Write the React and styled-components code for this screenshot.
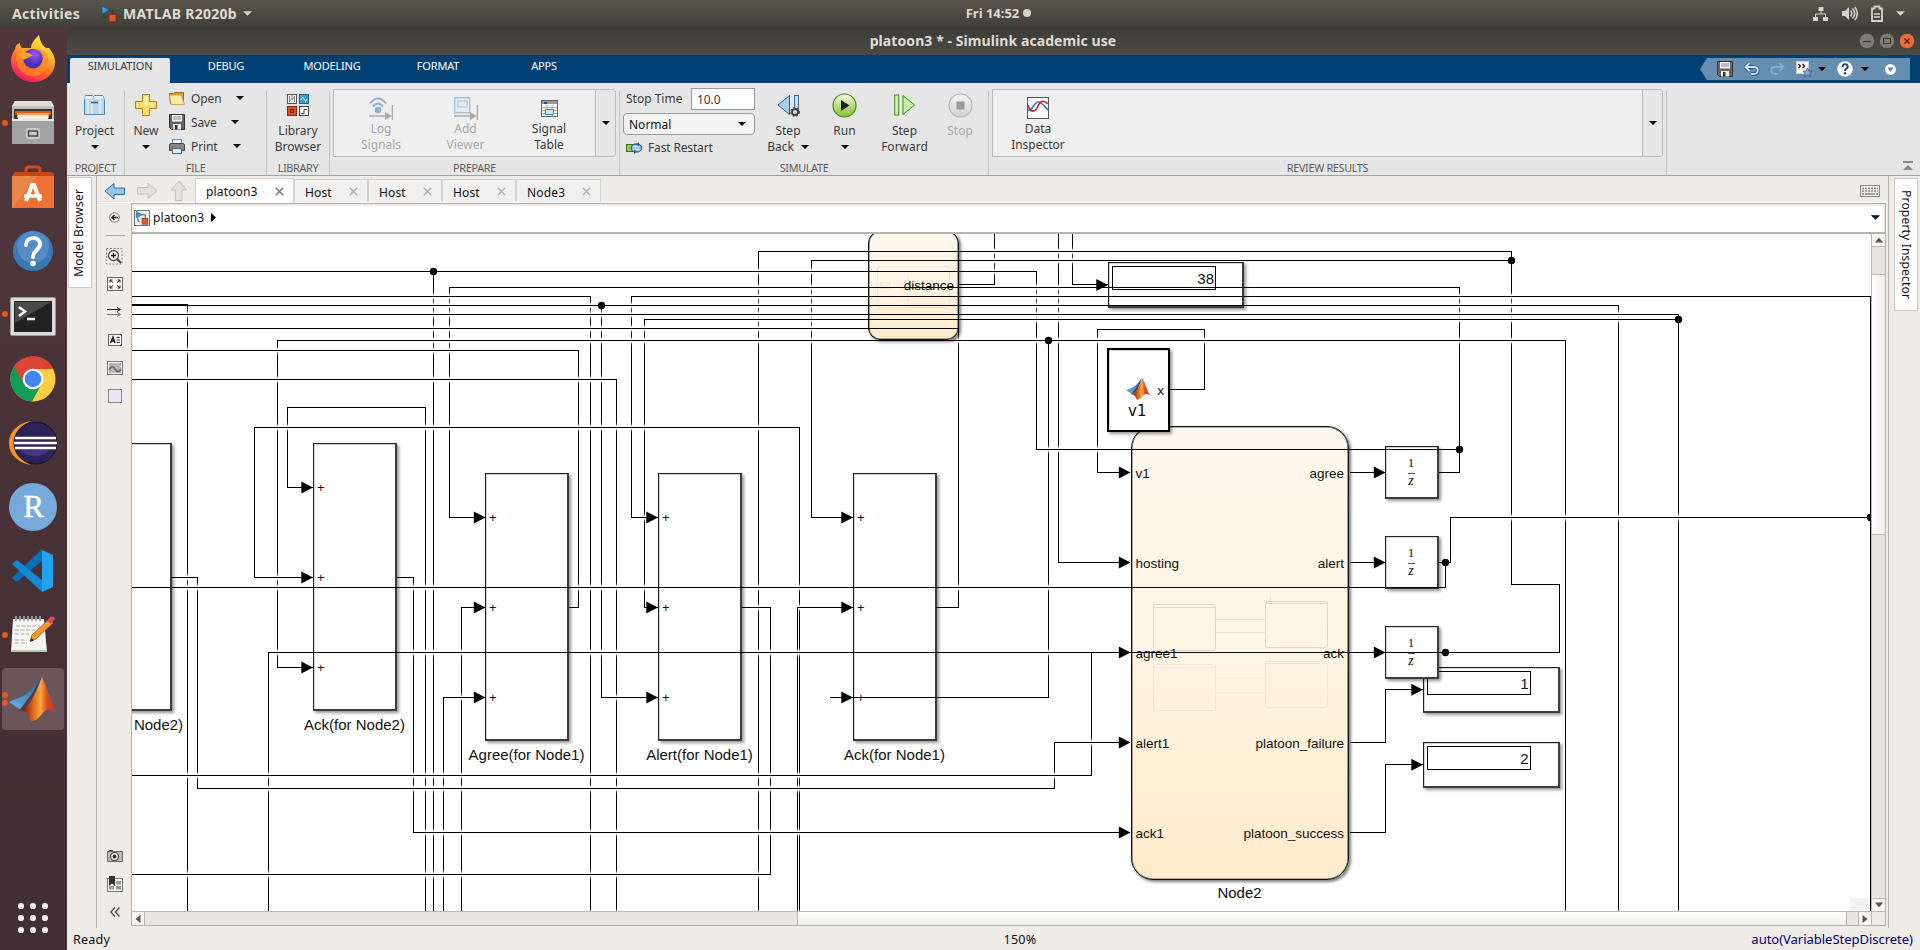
import React from "react";
import styled, { createGlobalStyle, css } from "styled-components";

const UI = `"Noto Sans", "Open Sans", sans-serif`;

const Global = createGlobalStyle`
  * { box-sizing: border-box; }
  body { margin: 0; overflow: hidden; background: #efebe7; font-family: ${UI}; color: #1a1a1a; }
  svg { display: block; flex: none; }
`;

/* ---------- shell ---------- */
const Screen = styled.div`
  width: 1920px; height: 950px; display: flex; flex-direction: column; overflow: hidden;
`;
const TopBar = styled.header`
  height: 27px; flex: none; display: grid; grid-template-columns: 1fr auto 1fr; align-items: center;
  background: linear-gradient(#5a564d, #403f39); color: #dfdbd2; font-size: 14px; line-height: 26px; font-weight: 700;
  padding: 0 15px 0 12px; white-space: nowrap;
`;
const TopGroup = styled.div`
  display: flex; align-items: center; gap: ${p => p.$gap || 0}px; justify-content: ${p => p.$end ? "flex-end" : "flex-start"};
`;
const Clock = styled(TopGroup)`font-size: 13px; position: relative; left: 40px; padding-bottom: 1px;`;
const TopText = styled.span`letter-spacing: ${p => p.$ls || 0}px; margin: 0 ${p => p.$mr || 0}px 0 ${p => p.$ml || 0}px;`;
const Body = styled.div`flex: 1; display: flex; min-height: 0;`;
const Dock = styled.nav`
  width: 67px; flex: none; display: flex; flex-direction: column;
  background: linear-gradient(#50363b, #483237 50%, #402f35);
`;
const DockItem = styled.div`
  height: 64px; flex: none; display: flex; align-items: center; justify-content: center; position: relative;
  padding: ${p => p.$down || 0}px 1px ${p => p.$up || 0}px 0;
  ${p => p.$active && css`
    &::before { content: ""; position: absolute; left: 2px; top: 1px; width: 62px; height: 62px; border-radius: 4px; background: #69555a; }
  `}
  svg { position: relative; }
`;
const Pip = styled.i`
  position: absolute; left: 2px; top: ${p => p.$y}px; width: 6px; height: 6px; border-radius: 50%; background: #e95420; z-index: 1;
`;
const DockFoot = styled(DockItem)`margin-top: auto; height: 64px;`;
const Window = styled.main`flex: 1; display: flex; flex-direction: column; min-width: 0;`;
const TitleBar = styled.div`
  height: 28px; flex: none; display: grid; grid-template-columns: 1fr auto 1fr; align-items: center; color: #dfdbd2;
  background: linear-gradient(#3c3b37, #4b4a44); font-size: 14px; line-height: 26px; font-weight: 700; padding: 0 5px 0 0;
`;
const WinButtons = styled.div`display: flex; gap: 4px; justify-content: flex-end;`;
const WinTitle = styled.span`margin-left: 4px; letter-spacing: .08px; padding-bottom: 1px;`;

/* ---------- ribbon ---------- */
const TabStrip = styled.div`
  height: 28px; flex: none; background: #004073; display: flex; align-items: flex-start; padding: 3px 10px 0 3px;
`;
const RibbonTab = styled.div`
  width: ${p => p.$active ? 100 : 106}px; margin-right: ${p => p.$active ? 3 : 0}px; height: 25px; border-radius: 2px 2px 0 0;
  background: ${p => p.$active ? "#e6e6e6" : "transparent"}; color: ${p => p.$active ? "#3b3b3b" : "#fff"};
  font-size: 11px; line-height: 16px; text-align: center; letter-spacing: ${p => p.$ls}px;
`;
const Quick = styled.div`
  margin-left: auto; width: 210px; height: 22px; background: #688eaf; display: flex; align-items: center; padding-left: 17px;
  clip-path: polygon(0 50%, 7px 0, 100% 0, 100% 100%, 7px 100%);
`;
const Gap = styled.i`flex: none; width: ${p => p.$w}px;`;
const Ribbon = styled.div`
  height: 93px; flex: none; background: #e6e6e6; border-bottom: 1px solid #a0a0a0; display: flex;
`;
const Section = styled.section`
  width: ${p => p.$w}px; flex: none; position: relative; display: flex; flex-direction: column;
  &::after { content: ""; position: absolute; right: 0; top: 8px; bottom: 0; width: 1px; background: #c4c4c4; }
`;
const SectionBody = styled.div`height: 77px; display: flex; align-items: flex-start; padding-left: ${p => p.$pl || 0}px;`;
const Caption = styled.div`
  height: 15px; line-height: 15px; font-size: 10.8px; color: #5b5b5b; text-align: center; letter-spacing: ${p => p.$ls ?? -0.3}px; white-space: nowrap;
  padding-right: 1px;
`;
const BigButton = styled.div`
  width: ${p => p.$w}px; flex: none; padding-top: ${p => p.$top ?? 10}px; display: flex; flex-direction: column; align-items: center;
  font-size: 12px; line-height: 16px; color: ${p => p.$off ? "#a9a9a9" : "#3b3b3b"}; text-align: center; white-space: nowrap;
`;
const IconBox = styled.div`height: 24px; display: flex; align-items: center; margin-bottom: ${p => p.$mb ?? 6}px;`;
const Line = styled.div`height: 16px; display: flex; align-items: center; gap: 7px;`;
const FileList = styled.div`padding: 3px 0 0 2px; display: flex; flex-direction: column;`;
const FileRow = styled.div`height: 24px; display: flex; align-items: center; gap: 6px; font-size: 12px; color: #3b3b3b;`;
const RowLabel = styled.span`width: ${p => p.$w}px; white-space: nowrap; letter-spacing: -.1px;`;
const Gallery = styled.div`
  margin-top: 6px; width: ${p => p.$w}px; height: 68px; border: 1px solid #bcbcbc; border-radius: 0 3px 3px 0; background: #efefef; display: flex;
`;
const GalleryDrop = styled.div`
  margin-left: auto; width: 20px; border-left: 1px solid #bcbcbc; background: #e6e6e6; display: flex; align-items: center; justify-content: center;
  border-radius: 0 3px 3px 0;
`;
const SimForm = styled.div`width: 135px; padding-top: 5px; display: flex; flex-direction: column; gap: 3px;`;
const SimRow = styled.div`
  height: 22px; display: flex; align-items: center; justify-content: space-between; padding: 0 3px; font-size: 12px; color: #3b3b3b; white-space: nowrap;
`;
const RaisedLabel = styled.span`padding-bottom: 2px;`;
const Input = styled.div`
  width: 64px; height: 22px; background: #fff; border: 1px solid #999; padding-left: 5px; line-height: 22px; font-size: 12px; letter-spacing: -.1px;
`;
const Select = styled.div`
  width: 132px; height: 22px; background: #f4f4f4; border: 1px solid #999; border-radius: 4px; display: flex; align-items: center;
  justify-content: space-between; padding: 0 8px 0 5px; font-size: 12px; color: #111;
`;
const FastRestart = styled(SimRow)`justify-content: flex-start; gap: 5px; height: 19px; letter-spacing: -.15px;`;
const RibbonRest = styled.div`flex: 1; display: flex; align-items: flex-end; justify-content: flex-end; padding: 0 7px 4px 0;`;

/* ---------- workspace ---------- */
const Workspace = styled.div`flex: 1; display: flex; min-height: 0; background: #efebe7;`;
const LeftRail = styled.aside`width: 30px; flex: none; border-right: 1px solid #b5b3b0; padding: 1px 0 0 1px;`;
const RightRail = styled.aside`width: 32px; flex: none; border-left: 1px solid #b5b3b0; padding: 2px 0 0 5px;`;
const SideTab = styled.div`
  width: 24px; height: ${p => p.$h}px; background: #fff; border: 1px solid #c8c8c8; writing-mode: vertical-rl; font-size: 12px; line-height: ${p => p.$flip ? 20 : 22}px;
  text-align: center; transform: ${p => p.$flip ? "rotate(180deg)" : "none"}; letter-spacing: ${p => p.$ls}px; color: #111;
`;
const Center = styled.div`flex: 1; display: flex; flex-direction: column; min-width: 0;`;
const DocBar = styled.div`
  height: 27px; flex: none; display: flex; align-items: flex-end; padding: 0 8px 0 7px; border-bottom: 1px solid #fff;
`;
const NavIcons = styled.div`width: 91px; height: 25px; display: flex; align-items: center; gap: 10px;`;
const DocTab = styled.div`
  width: ${p => p.$w}px; height: ${p => p.$active ? 25 : 23}px; margin-bottom: ${p => p.$active ? -1 : 0}px; padding: 0 9px 0 10px;
  background: ${p => p.$active ? "#fff" : "#f0f0f0"}; border: 1px solid #d2d2d2; border-bottom: 0;
  display: flex; align-items: center; justify-content: space-between; font-size: 12px; color: #111; letter-spacing: .15px;
`;
const TabLabel = styled.span`padding-top: ${p => p.$active ? 1 : 3}px;`;
const Keyboard = styled.div`margin-left: auto; height: 22px; display: flex; align-items: center; padding-bottom: 1px;`;
const EditorRow = styled.div`flex: 1; display: flex; min-height: 0;`;
const Palette = styled.div`
  width: 34px; flex: none; display: flex; flex-direction: column; align-items: center; padding: 9px 0 2px;
`;
const PaletteIcon = styled.div`height: 28px; display: flex; align-items: center; justify-content: center; padding-left: 1px;`;
const PaletteRule = styled.i`width: 19px; height: 1px; background: #a8a8a8; margin: 12px 0 6px 2px;`;
const Spring = styled.i`flex: 1;`;
const Editor = styled.div`width: 1755px; display: flex; flex-direction: column; border: 1px solid #b5b3b0; border-top-color: #b0aeaa; height: 723px;`;
const PathBar = styled.div`
  height: 30px; flex: none; border: 2px solid #efebe7; background: #fff; display: flex; align-items: center; gap: 3px; padding: 0 3px 3px 0;
  font-size: 12px; color: #111; letter-spacing: .1px;
`;
const PathDrop = styled.div`margin-left: auto;`;
const CanvasRow = styled.div`display: grid; grid-template-columns: 1739px 14px; grid-template-rows: 677px 14px; border-top: 2px solid #b5b3b0; margin-top: -2px;`;
const Canvas = styled.div`position: relative; overflow: hidden; background: #fff;`;
const VScroll = styled.div`display: flex; flex-direction: column; background: #e7e4e1; border-left: 1px solid #bcb9b5;`;
const HScroll = styled.div`display: flex; background: #e7e4e1; border-top: 1px solid #bcb9b5;`;
const ScrollBtn = styled.div`
  width: 13px; height: 13px; flex: none; background: #f6f5f3; display: flex; align-items: center; justify-content: center;
  border: 0 solid #bcb9b5; border-width: ${p => p.$b};
`;
const Trough = styled.i`flex: ${p => p.$s ? `0 0 ${p.$s}px` : 1};`;
const VThumb = styled.i`height: 261px; border: solid #bcb9b5; border-width: 1px 0; background: linear-gradient(90deg, #fff, #f0eeeb);`;
const HThumb = styled.i`width: 1050px; border: solid #bcb9b5; border-width: 0 1px; background: linear-gradient(#fff, #f0eeeb);`;
const Corner = styled.i`background: #efebe7; border: solid #bcb9b5; border-width: 1px 0 0 1px;`;
const StatusBar = styled.footer`
  height: 22px; flex: none; background: #efebe7; display: grid; grid-template-columns: 1fr auto 1fr; align-items: center; padding: 0 7px 0 6px;
  font-size: 12.6px; color: #111; letter-spacing: .2px;
`;
const Zoom = styled.span`position: relative; left: 27px; letter-spacing: .2px;`;
const Solver = styled.span`text-align: right; color: #00007c; font-size: 13px; letter-spacing: -.02px;`;

/* ---------- diagram ---------- */
const OX = 132, OY = 234;
const place = css`position: absolute; left: ${p => p.$x - OX}px; top: ${p => p.$y - OY}px; width: ${p => p.$w}px; height: ${p => p.$h}px;`;
const Block = styled.div`
  ${place} background: #fff; border: solid #2c2c2c; border-width: ${p => p.$bw ? `${p.$bw}px` : "1px 2px 2px 1px"};
  border-color: ${p => p.$bw ? "#000" : "#222 #3c3c3c #3c3c3c #222"};
  box-shadow: inset .5px .5px 0 rgba(0,0,0,.35), 2px 2px 3px rgba(0,0,0,.42);
  font-family: "Liberation Sans", Arial, sans-serif; color: #111;
`;
const Chart = styled(Block)`
  border-radius: ${p => p.$r}px; border: 1px solid #111; background: linear-gradient(#fff8ee, #fff5e3 50%, #feebcb);
  box-shadow: inset 0 0 0 .6px rgba(0,0,0,.6), 2px 2px 3px rgba(0,0,0,.5);
`;
const BlockName = styled.div`
  position: absolute; left: ${p => p.$cx - OX - (p.$w || 160) / 2}px; top: ${p => p.$y - OY}px; width: ${p => p.$w || 160}px; text-align: center;
  font: 15px/18px "Liberation Sans", Arial, sans-serif; color: #111;
`;
const Port = styled.div`
  position: absolute; top: ${p => p.$y}px; ${p => p.$side || "left"}: ${p => p.$plus ? 3 : 4}px; font-size: ${p => p.$plus ? 13 : 13.5}px; line-height: 16px; white-space: nowrap;
`;
const Readout = styled.div`
  margin: 3px 0 0 3px; width: ${p => p.$w}px; height: 24px; border: 1px solid #000; text-align: right; padding-right: 1px; font-size: 15px; line-height: 23px;
`;
const Fraction = styled.div`
  height: 100%; display: flex; flex-direction: column; align-items: center; justify-content: center; font: 13px/15px "Liberation Serif", serif; padding: 0 1px 1px 0;
  i { width: 7px; height: 1px; background: #555; margin: 3px 0 0; }
`;
const ZVar = styled.em`font-size: 14px; line-height: 14px;`;
const FnName = styled.div`position: absolute; left: 19px; top: 52px; font: 15px/18px "DejaVu Sans", sans-serif;`;
const FnLogo = styled.div`position: absolute; left: 17px; top: 27px;`;
const Wires = styled.svg`position: absolute; left: 0; top: 0;`;
const Ghost = styled.svg`position: absolute; left: ${p => p.$x}px; top: ${p => p.$y}px;`;
const Grip = styled.i`position: absolute; right: 3px; bottom: 1px; width: 18px; height: 12px; background: #f2f2f2;`;

const B = 911;
const wires = [
  [[132,271.5],[1036.5,271.5],[1036.5,449.5],[1459.5,449.5]],
  [[433.5,271.5],[433.5,B]],
  [[132,296.5],[590.5,296.5],[590.5,B]],
  [[132,304.5],[187.5,304.5],[187.5,B]],
  [[132,305.5],[1618.5,305.5],[1618.5,B]],
  [[601.5,305.5],[601.5,697.5],[658,697.5]],
  [[132,314.5],[1678.5,314.5],[1678.5,B]],
  [[1678.5,319.5],[644.5,319.5],[644.5,607.5],[658,607.5]],
  [[132,328.5],[958.5,328.5],[958.5,607.5],[936,607.5]],
  [[313,667.5],[277.5,667.5],[277.5,340.5],[1565.5,340.5],[1565.5,B]],
  [[1048.5,340.5],[1048.5,697.5],[830,697.5]],
  [[132,350.5],[578.5,350.5],[578.5,607.5],[569,607.5]],
  [[132,379.5],[616.5,379.5],[616.5,B]],
  [[313,487.5],[287.5,487.5],[287.5,407.5],[425.5,407.5],[425.5,B]],
  [[313,577.5],[254.5,577.5],[254.5,427.5],[799.5,427.5],[799.5,B]],
  [[486,517.5],[449.5,517.5],[449.5,287.5],[1459.5,287.5],[1459.5,472.5],[1439,472.5]],
  [[758.5,B],[758.5,251.5],[1511.5,251.5],[1511.5,584.5],[1559.5,584.5],[1559.5,652.5],[268.5,652.5],[268.5,B]],
  [[1511.5,260.5],[811.5,260.5],[811.5,517.5],[853,517.5]],
  [[658,517.5],[631.5,517.5],[631.5,296.5],[1870.5,296.5],[1870.5,B]],
  [[1870.5,517.5],[1450.5,517.5],[1450.5,562.5],[1439,562.5]],
  [[1445.5,562.5],[1445.5,587.5],[132,587.5]],
  [[171,577.5],[197.5,577.5],[197.5,788.5],[1054.5,788.5],[1054.5,742.5],[1130,742.5]],
  [[397,577.5],[413.5,577.5],[413.5,832.5],[1130,832.5]],
  [[132,775.5],[1091.5,775.5],[1091.5,652.5]],
  [[132,874.5],[770.5,874.5],[770.5,607.5],[742,607.5]],
  [[486,607.5],[461.5,607.5],[461.5,B]],
  [[486,697.5],[443.5,697.5],[443.5,B]],
  [[853,607.5],[797.5,607.5],[797.5,B]],
  [[959,284.5],[994.5,284.5],[994.5,234]],
  [[1058.5,234],[1058.5,562.5],[1130,562.5]],
  [[1072.5,234],[1072.5,284.5],[1108,284.5]],
  [[1170,389.5],[1204.5,389.5],[1204.5,329.5],[1097.5,329.5],[1097.5,472.5],[1130,472.5]],
  [[1350,472.5],[1386,472.5]],
  [[1350,562.5],[1386,562.5]],
  [[1350,742.5],[1385.5,742.5],[1385.5,689.5],[1423,689.5]],
  [[1350,832.5],[1385.5,832.5],[1385.5,764.5],[1423,764.5]],
];
const arrows = [
  [313,487.5],[313,577.5],[313,667.5],[485.5,517.5],[485.5,607.5],[485.5,697.5],[658,517.5],[658,607.5],[658,697.5],
  [853,517.5],[853,607.5],[853,697.5],[1130.5,472.5],[1130.5,562.5],[1130.5,652.5],[1130.5,742.5],[1130.5,832.5],
  [1385.5,472.5],[1385.5,562.5],[1385.5,652.5],[1423,689.8],[1423,764.8],[1108,284.9],
];
const dots = [[433.5,271.5],[601.5,305.5],[1048.5,340.5],[1511.5,260.5],[1678.5,319.5],[1459.5,449.5],[1445.5,562.5],[1445.5,652.5],[1870.5,517.5]];

const segs = wires.flatMap(w => w.slice(1).map((b, i) => [w[i], b]));
const hor = segs.filter(([a, b]) => a[1] === b[1]).map(([a, b]) => ({ y: a[1], x1: Math.min(a[0], b[0]), x2: Math.max(a[0], b[0]) }));
const ver = segs.filter(([a, b]) => a[0] === b[0]).map(([a, b]) => ({ x: a[0], y1: Math.min(a[1], b[1]), y2: Math.max(a[1], b[1]) }));
const belowView = { y: 913.5, x1: 585, x2: 1700 };
const fades = ver.flatMap(v => [...hor, belowView]
  .filter(h => h.x1 < v.x - 1 && h.x2 > v.x + 1 && h.y > v.y1 + 1 && (h.y < v.y2 - 1 || h === belowView && v.y2 === B))
  .map(h => [v.x, h.y - 6]));

const Diagram = () => (
  <Wires width="1739" height="677" viewBox="132 234 1739 677">
    <defs>
      <linearGradient id="hop" x1="0" y1="0" x2="0" y2="1">
        <stop offset="0" stopColor="#fff" stopOpacity="0" /><stop offset=".22" stopColor="#fff" stopOpacity=".22" /><stop offset=".42" stopColor="#fff" />
        <stop offset=".58" stopColor="#fff" /><stop offset=".78" stopColor="#fff" stopOpacity=".22" /><stop offset="1" stopColor="#fff" stopOpacity="0" />
      </linearGradient>
    </defs>
    <g stroke="#000" shapeRendering="crispEdges">
      {ver.map((v, i) => <line key={i} x1={v.x} x2={v.x} y1={v.y1 - .5} y2={v.y2 + .5} />)}
    </g>
    {fades.map(([x, y], i) => <rect key={i} x={x - .5} y={y} width="1" height="12" fill="url(#hop)" />)}
    <g stroke="#000" shapeRendering="crispEdges">
      {hor.map((h, i) => <line key={i} x1={h.x1} x2={h.x2} y1={h.y} y2={h.y} />)}
    </g>
    {arrows.map(([x, y], i) => <path key={i} d={`M${x} ${y}l-11.7 -6v12z`} />)}
    {dots.map(([x, y], i) => <circle key={i} cx={x} cy={y} r="3.7" />)}
  </Wires>
);

const Sum = ({ x, y, name }) => (
  <>
    <Block $x={x} $y={y} $w={84} $h={268}>
      {[36, 126, 216].map(t => <Port key={t} $y={t} $plus>+</Port>)}
    </Block>
    <BlockName $cx={x + 41.5} $y={y + 273}>{name}</BlockName>
  </>
);
const Display = ({ x, y, w, rw, value }) => (
  <Block $x={x} $y={y} $w={w} $h={46}><Readout $w={rw}>{value}</Readout></Block>
);
const Delay = ({ y }) => (
  <Block $x={1385} $y={y} $w={54} $h={52.5}><Fraction>1<i /><ZVar>z</ZVar></Fraction></Block>
);

/* ---------- icons ---------- */
const Caret = ({ w = 8, h = 4, c = "#000" }) => <svg width={w} height={h} viewBox="0 0 8 4"><path d="M0 0h8L4 4z" fill={c} /></svg>;

const SimulinkMark = ({ s = 16, boxed }) => (
  <svg width={s} height={s} viewBox="0 0 16 16">
    {boxed && <rect x=".5" y=".5" width="15" height="15" fill="#eee" stroke="#777" />}
    <g transform={boxed ? "translate(1.5 1.5) scale(.82)" : ""}>
      <path d="M1 0v8l7-4z" fill="#3aa0dc" stroke="#125a94" strokeWidth=".7" />
      <path d="M8 4h4v5M5 12H3V8" fill="none" stroke="#333" /><rect x="8" y="8.500" width="7" height="7" fill="#e4572a" stroke="#8a2c0a" strokeWidth=".8" />
    </g>
  </svg>
);
const MatlabLogo = ({ w, h }) => (
  <svg width={w} height={h} viewBox="0 0 48 45">
    <defs>
      <linearGradient id="ml" x1="0" y1="0" x2="1" y2="0"><stop offset="0" stopColor="#7c1c14" /><stop offset=".35" stopColor="#e8741e" /><stop offset=".52" stopColor="#f7a93c" /><stop offset=".7" stopColor="#dc4a22" /><stop offset="1" stopColor="#c23322" /></linearGradient>
      <linearGradient id="mb" x1="0" y1="1" x2="1" y2="0"><stop offset="0" stopColor="#6ab8e8" /><stop offset="1" stopColor="#1c5c96" /></linearGradient>
    </defs>
    <path d="M0 25l14-6C20 16 26 8 32 0c-4 12-8 23-14 31-3 1-5-1-6 2z" fill="url(#mb)" />
    <path d="M33 0c5 10 9 26 15 36-5-4-9-5-13-1-4 4-8 10-13 9-2-4-5-10-8-10 9-8 14-21 19-34z" fill="url(#ml)" />
    <path d="M32 1c-5 11-8 24-18 33-2-1-3-1-5 1 8-11 16-19 23-34z" fill="#6b1712" opacity=".75" />
  </svg>
);
const Firefox = () => (
  <svg width="46" height="47" viewBox="0 0 46 47">
    <defs>
      <linearGradient id="ff" x1=".8" y1="0" x2=".3" y2="1"><stop offset="0" stopColor="#fff44f" /><stop offset=".35" stopColor="#ffbd2f" /><stop offset=".65" stopColor="#ff6a2a" /><stop offset="1" stopColor="#f0136f" /></linearGradient>
      <radialGradient id="fp" cx=".6" cy=".3"><stop offset="0" stopColor="#9b5cff" /><stop offset="1" stopColor="#4a2fb5" /></radialGradient>
    </defs>
    <path d="M5 14c0-3 2-5 5-6 0 3 1 4 2 5l9 0c0-5 4-9 8-13 1 6 3 10 7 13l3 0c4 5 6 9 6 14 0 12-10 20-22 20S1 38 1 26c0-5 2-9 4-12z" fill="url(#ff)" />
    <path d="M6 19c5-3 13-2 17 2-4 1-5 4-10 4 0 5 4 9 10 9 7 0 12-5 10-12-1-4-4-7-7-9 9 2 14 8 12 16-2 8-9 13-17 12C11 40 5 31 6 19z" fill="#ff8a1e" opacity=".7" />
    <circle cx="23" cy="23.500" r="9.800" fill="url(#fp)" />
    <path d="M7 19c5-3 12-2 16 1.500-4 1-5 3.500-9.500 4z" fill="#ffa428" />
  </svg>
);
const Files = () => (
  <svg width="44" height="44" viewBox="0 0 44 44">
    <path d="M4 0h36l3 5v38H1V5z" fill="#bdbdbd" /><path d="M4 0h36l3 5H1z" fill="#dedede" />
    <rect x="3" y="8" width="38" height="12" fill="#333" /><rect x="4" y="10" width="36" height="4" fill="#c95f1f" /><rect x="6" y="12" width="32" height="5" fill="#f0a04a" /><rect x="7" y="14" width="30" height="5" fill="#f4efe6" />
    <rect x="1" y="18" width="42" height="25" fill="#a3a3a3" /><rect x="1" y="18" width="42" height="2" fill="#e8e8e8" />
    <rect x="15" y="27" width="14" height="11" rx="2" fill="#ccc" /><rect x="17.500" y="30" width="9" height="5" fill="none" stroke="#444" strokeWidth="1.500" />
  </svg>
);
const Software = () => (
  <svg width="44" height="44" viewBox="0 0 44 44">
    <path d="M15 14V5q0-3 3-3h8q3 0 3 3v9" fill="none" stroke="#d5491c" strokeWidth="3" /><path d="M2 9l2-2h37l2 2v5H1z" fill="#c4461c" />
    <rect x="1" y="11" width="42" height="32" fill="#ee7135" /><path d="M1 43V11h25z" fill="#e8925a" opacity=".6" />
    <g stroke="#fff" fill="none" strokeWidth="4"><path d="M15 36l6-16h2l6 16" /></g><path d="M13 31h18" stroke="#fff" strokeWidth="3.500" />
  </svg>
);
const Help = () => (
  <svg width="42" height="42" viewBox="0 0 42 42"><circle cx="21" cy="21" r="20" fill="#3b79b4" /><circle cx="21" cy="17" r="16" fill="#6f9fdb" opacity=".5" />
    <path d="M14 15c0-9 14-9 14-1 0 6-7 6-7 13" fill="none" stroke="#fff" strokeWidth="4" strokeLinecap="round" /><circle cx="21" cy="33.500" r="2.800" fill="#fff" /></svg>
);
const Terminal = () => (
  <svg width="46" height="39" viewBox="0 0 46 39"><rect width="46" height="39" rx="2" fill="#9a9a9a" /><rect x="1" y="1" width="44" height="37" rx="1" fill="#dcdcdc" /><rect x="4" y="4" width="38" height="31" fill="#222" />
    <path d="M5 5h36L5 26z" fill="#4a4a4a" /><path d="M9 10l6 4.500-6 4.500" fill="none" stroke="#fff" strokeWidth="2.500" /><path d="M17 22h8" stroke="#fff" strokeWidth="2.500" /></svg>
);
const Chrome = () => (
  <svg width="46" height="46" viewBox="0 0 46 46"><circle cx="23" cy="23" r="22.500" fill="#ffcd40" />
    <path d="M23 23L4 11A22.500 22.500 0 0 1 43 12H23z" fill="#db4437" /><path d="M4 11A22.500 22.500 0 0 0 22 45.500L31 29l-8-6z" fill="#0f9d58" /><path d="M4 11l9 15 10-13h20A22.500 22.500 0 0 0 4 11z" fill="#db4437" />
    <circle cx="23" cy="23" r="10.300" fill="#fff" /><circle cx="23" cy="23" r="8.300" fill="#4285f4" /></svg>
);
const Eclipse = () => (
  <svg width="48" height="44" viewBox="0 0 48 44"><path d="M22 0C10 2 0 10 0 22s10 20 22 22C12 39 8 32 8 22S12 5 22 0z" fill="#f7941e" />
    <ellipse cx="26.500" cy="22" rx="21.500" ry="21" fill="#2c2255" stroke="#15102c" /><path d="M12 29a16 12 0 0 0 28 0z" fill="#46358a" />
    <path d="M6 17h41M5 22h43M6 27h41" stroke="#fff" strokeWidth="2.500" /></svg>
);
const RIcon = () => (
  <svg width="48" height="48" viewBox="0 0 48 48"><circle cx="24" cy="24" r="24" fill="#75aadb" /><text x="24.500" y="33.500" textAnchor="middle" fontFamily="Liberation Serif" fontSize="31" fill="#fff" stroke="#fff" strokeWidth=".5">R</text></svg>
);
const VSCode = () => (
  <svg width="44" height="44" viewBox="0 0 44 44"><path d="M31 1l11 5v32l-11 5z" fill="#23a3ee" /><path d="M31 1v12L6 34l-5-4z" fill="#0b6fb8" transform="translate(0 -1)" /><path d="M31 43V31L6 11l-5 4z" fill="#1388d4" /></svg>
);
const Gedit = () => (
  <svg width="46" height="38" viewBox="0 0 46 38"><path d="M3 4h31l3 33H1z" fill="#f4f4f0" /><path d="M1 35h36v2H1z" fill="#b7c9ad" />
    <path d="M6 6V1M10 6V1M14 6V1M18 6V1M22 6V1M26 6V1M30 6V1" stroke="#999" strokeWidth="1.800" /><path d="M6 11h24M5 15h22M5 19h14M5 25h10M5 28h12" stroke="#aaa" strokeWidth="1.200" strokeDasharray="4 1.500" />
    <path d="M20 26l2-6L39 4l4 4-17 16z" fill="#f29a2e" stroke="#a65c12" strokeWidth=".8" /><path d="M37 6l3-4q3-2 5 2l-4 5z" fill="#d8455a" /><path d="M20 27l1.500-4 2.500 2.500z" fill="#222" /></svg>
);
const Apps = () => (
  <svg width="32" height="32" viewBox="0 0 32 32">{[4, 16, 28].flatMap(x => [4, 16, 28].map(y => <circle key={x + "-" + y} cx={x} cy={y} r="3.100" fill="#eee" />))}</svg>
);

const Network = () => <svg width="16" height="16" viewBox="0 0 16 16" fill="#d5d3cf"><path d="M5.500 1h5v4h-5zM0 11h5v4H0zM10 11h5v4h-5z" /><path d="M8 5v3M2.500 11V8h10v3" fill="none" stroke="#d5d3cf" /></svg>;
const Volume = () => <svg width="16" height="15" viewBox="0 0 16 15" fill="#d5d3cf"><path d="M0 5h3l4-4v13l-4-4H0z" /><path d="M8.500 4.500q2.500 3 0 6M10.500 2.500q4.500 5 0 10M12.800 1q5 6.500 0 13" fill="none" stroke="#d5d3cf" strokeWidth="1.500" /></svg>;
const Battery = () => <svg width="12" height="17" viewBox="0 0 12 17"><path d="M1 3.500h2.500v-2h5v2H11V16H1z" fill="none" stroke="#d5d3cf" strokeWidth="1.800" /><path d="M3 9h6M3 12h6" stroke="#d5d3cf" strokeWidth="1.600" /></svg>;
const WinButton = ({ kind }) => (
  <svg width="16" height="16" viewBox="0 0 16 16"><circle cx="8" cy="8" r="7.700" fill={kind === "x" ? "#ec6a40" : "#7d7b74"} stroke="#35342f" strokeWidth=".6" />
    {kind === "-" && <path d="M4 8.500h8" stroke="#35342f" />}{kind === "o" && <rect x="4.500" y="5.500" width="7" height="5" fill="none" stroke="#35342f" />}
    {kind === "x" && <path d="M5.500 5.500l5 5M10.500 5.500l-5 5" stroke="#51200d" strokeWidth="1.300" />}</svg>
);
const Save = () => <svg width="16" height="16" viewBox="0 0 16 16"><path d="M.5.500h15v15H2.500l-2-2z" fill="#666" stroke="#333" /><rect x="3" y="1" width="10" height="6.500" fill="#f5f5f5" /><path d="M4 3h8M4 5h8" stroke="#888" /><rect x="4" y="10" width="8" height="5.500" fill="#eee" /><rect x="6" y="11" width="2.500" height="4.500" fill="#333" /></svg>;
const Undo = ({ redo }) => (
  <svg width="16" height="14" viewBox="0 0 16 14" opacity={redo ? .5 : 1}>
    <g transform={redo ? "translate(16 0) scale(-1 1)" : undefined} fill="none">
      {!redo && <path d="M5.500 1L1.500 5l4 4M2 5h8c5 0 5 7 0 7H7" stroke="#1e4f80" strokeWidth="3.600" />}
      <path d="M5.500 1L1.500 5l4 4M2 5h8c5 0 5 7 0 7H7" stroke={redo ? "#a9cbe6" : "#cfe6f8"} strokeWidth="1.900" />
    </g>
  </svg>
);
const Shortcut = () => <svg width="17" height="17" viewBox="0 0 17 17"><rect x=".5" y=".5" width="12" height="12" fill="#f7f7f7" stroke="#ccc" /><path d="M2.500 3l2 2-2 2M6.500 3l2 2-2 2" fill="none" stroke="#222" strokeWidth="1.300" /><path d="M11.500 7l1.400 3 3.300.3-2.500 2.200.8 3.300-3-1.700-3 1.700.8-3.300L6.800 10.300l3.300-.3z" fill="#7fb0dc" stroke="#274f7c" strokeWidth=".7" /></svg>;
const HelpSmall = () => <svg width="16" height="16" viewBox="0 0 16 16"><circle cx="8" cy="8" r="7.800" fill="#f5f7f9" /><path d="M5.500 6c0-4 5.200-3.500 5.200-.3C10.700 7.500 8 7.500 8 10" fill="none" stroke="#2a3f57" strokeWidth="1.900" /><circle cx="8" cy="12.300" r="1.200" fill="#2a3f57" /></svg>;
const DropRound = () => <svg width="11" height="11" viewBox="0 0 11 11"><circle cx="5.500" cy="5.500" r="5.400" fill="#fff" /><path d="M2.500 3.500h6L5.500 8z" fill="#5c87ad" /></svg>;
const Project = () => <svg width="21" height="20" viewBox="0 0 21 20"><path d="M1.500.5h7l1 1 1-1h8l2 4v15H.5v-15z" fill="#b9d5e9" stroke="#5586ab" /><path d="M1.500 1h7v3h-8zM11 1h7.500l1.500 3h-9z" fill="#e8f2f9" /><path d="M4 5v14M8 5v14M16 5v14" stroke="#d9eaf5" strokeWidth="2" /><path d="M7 7.500h7" stroke="#456" strokeWidth="1.500" /></svg>;
const Plus = () => <svg width="22" height="22" viewBox="0 0 22 22"><path d="M7.500.5h7v7h7v7h-7v7h-7v-7h-7v-7h7z" fill="#fbdd6e" stroke="#b48412" /><path d="M9 2h4v7h7v2H9z" fill="#fff3b8" opacity=".7" /></svg>;
const Folder = () => <svg width="16" height="13" viewBox="0 0 16 13"><path d="M.5 1.500h4l1-1h9v11H1.500z" fill="#d9a440" stroke="#946a1c" /><path d="M.5 3h12l3 9.500H2z" fill="#fdeaa0" stroke="#b58a35" strokeWidth=".7" /></svg>;
const Printer = () => <svg width="16" height="15" viewBox="0 0 16 15"><rect x="3.500" y=".5" width="9" height="5" fill="#eaf3fa" stroke="#6b8ca8" /><path d="M.5 5.500l1.500-1h12l1.500 1v6H.5z" fill="#858585" stroke="#444" /><rect x="3.500" y="9.500" width="9" height="5" fill="#dbeaf5" stroke="#567" /></svg>;
const Library = () => (
  <svg width="22" height="22" viewBox="0 0 22 22"><rect x=".5" y=".5" width="9" height="9" fill="#eee" stroke="#555" /><path d="M2.500 2v6M5 6V1M7.500 8V2M2 7l6-4" stroke="#888" fill="none" />
    <rect x="12.500" y=".5" width="9" height="9" fill="#2f9fd8" stroke="#14699c" /><path d="M14 6q1.500-5 3-1t3 0" fill="none" stroke="#fff" /><rect x=".5" y="12.500" width="9" height="9" fill="#dc4f1e" stroke="#8c2a08" /><rect x="3.500" y="15.500" width="3" height="3" fill="none" stroke="#6b1f04" />
    <rect x="12.500" y="12.500" width="9" height="9" fill="#f4f4f4" stroke="#444" /><path d="M14 19.500h3v-4h3" fill="none" stroke="#444" /></svg>
);
const LogSignals = () => <svg width="24" height="23" viewBox="0 0 24 23" fill="none"><path d="M1 6.500q8-10 16 0M4 9.500q5-6 10 0" stroke="#8fb3cf" strokeWidth="2" /><circle cx="9" cy="13" r="3.300" fill="#8fb3cf" /><path d="M0 19h17M23.500 8v15" stroke="#aaa" strokeWidth="1.500" /><path d="M16 15v8l7-4z" fill="#aaa" /></svg>;
const AddViewer = () => <svg width="24" height="23" viewBox="0 0 24 23" fill="none"><rect x=".7" y=".7" width="15" height="15" fill="#e3edf5" stroke="#9dbbd3" strokeWidth="1.200" /><rect x="4" y="4" width="9" height="6" stroke="#9dbbd3" /><path d="M0 19h17M23.500 8v15" stroke="#aaa" strokeWidth="1.500" /><path d="M16 15v8l7-4z" fill="#aaa" /></svg>;
const SignalTable = () => <svg width="17" height="17" viewBox="0 0 17 17"><rect x=".5" y=".5" width="16" height="16" fill="#fff" stroke="#666" /><rect x="1" y="1" width="15" height="3" fill="#999" /><rect x="3" y="2" width="3" height="2" fill="#0a5bb0" /><path d="M1 7.500h15M1 10.500h15M1 13.500h15M6 5v11M11 5v11" stroke="#999" strokeWidth=".8" /><rect x="4.500" y="9.500" width="8" height="5" fill="#cbe5fb" stroke="#3a8fdc" /></svg>;
const StepBack = () => <svg width="24" height="23" viewBox="-1 0 24 23"><path d="M12.500 1.500v19L1 11z" fill="#a9cdea" stroke="#2d628f" /><rect x="17.500" y="1.500" width="4" height="18" fill="#c3dff4" stroke="#3b719e" /><circle cx="18" cy="18" r="3" fill="#ddd" stroke="#444" strokeWidth="1.800" /><circle cx="18" cy="18" r="4.300" fill="none" stroke="#444" strokeWidth="1.300" strokeDasharray="1.800 1.800" /></svg>;
const Run = ({ off }) => <svg width="25" height="25" viewBox="0 0 25 25"><defs><linearGradient id={off ? "ro" : "rg"} x1="0" y1="0" x2="0" y2="1"><stop offset="0" stopColor={off ? "#f4f4f4" : "#f6fbe2"} /><stop offset="1" stopColor={off ? "#d2d2d2" : "#80c22e"} /></linearGradient></defs>
  <circle cx="12.500" cy="12.500" r="11.500" fill={`url(#${off ? "ro" : "rg"})`} stroke={off ? "#b5b5b5" : "#4b8a14"} strokeWidth="1.200" />{off ? <rect x="8.500" y="8.500" width="8" height="8" fill="#9b9b9b" /> : <path d="M9 7v11l8.500-5.500z" fill="#222" />}</svg>;
const StepFwd = () => <svg width="22" height="22" viewBox="0 0 22 22"><rect x=".7" y="1" width="4" height="20" fill="#d4efb4" stroke="#3c8a1e" /><path d="M9 1.500v19L20.500 11z" fill="#c8eea6" stroke="#3c8a1e" /></svg>;
const Fast = () => <svg width="17" height="12" viewBox="0 0 17 12"><rect x=".5" y="2.500" width="6" height="7" fill="#8fcf4d" stroke="#3d6d17" /><ellipse cx="10.500" cy="6" rx="5.300" ry="4" fill="#9cc4e4" stroke="#2f6391" strokeWidth="1.300" /><path d="M7.500 4.500h6M7.500 7.500h6" stroke="#e6f2fb" strokeWidth="1.200" /><path d="M8 12l3-2.500-3-2zM13 0l-3 2.500 3 2z" fill="#2f6391" /></svg>;
const DataInsp = () => <svg width="22" height="22" viewBox="0 0 22 22"><rect x=".5" y=".5" width="21" height="21" fill="#f8f8f8" stroke="#555" /><path d="M1 13C5 15 7 5 11 5s6 4 10 8" fill="none" stroke="#3178bd" strokeWidth="1.600" /><path d="M1 8c2 8 7 8 10 1s7-5 10-2" fill="none" stroke="#c1272d" strokeWidth="1.600" /></svg>;
const Collapse = () => <svg width="10" height="10" viewBox="0 0 10 10"><path d="M0 1h10" stroke="#8a8a8a" strokeWidth="2" /><path d="M5 4l5 5H0z" fill="#8a8a8a" /></svg>;
const NavArrow = ({ on, turn = 0 }) => <svg width="22" height="22" viewBox="0 -3 22 22"><path transform={`rotate(${turn} 11 9)`} d="M1 9l9-7.500V6h10.500v6.500H10V17z" fill={on ? "#96c5e8" : "#e2dfdc"} stroke={on ? "#2c6c9e" : "#c5c2be"} /></svg>;
const Close = ({ on }) => <svg width="9" height="9" viewBox="0 0 9 9"><path d="M.8.8l7.400 7.400M8.200.8L.8 8.200" stroke={on ? "#777" : "#b0b0b0"} strokeWidth="1.500" /></svg>;
const KeyboardIcon = () => <svg width="20" height="12" viewBox="0 0 20 12"><rect x=".5" y=".5" width="19" height="11" fill="#eee" stroke="#888" /><path d="M2 3.500h16M2 6h16" stroke="#888" strokeDasharray="2 1" strokeWidth="1.500" /><path d="M2 9h2M5 9h10M16 9h2" stroke="#888" strokeWidth="1.500" /></svg>;

const paletteIcons = {
  hide: <svg width="11" height="11" viewBox="0 0 11 11"><circle cx="5.500" cy="5.500" r="4.800" fill="#f4f4f4" stroke="#777" /><path d="M9 5.500H3M5.500 3L3 5.500 5.500 8" fill="none" stroke="#222" strokeWidth="1.400" /></svg>,
  zoom: <svg width="17" height="17" viewBox="0 0 17 17"><rect x=".5" y=".5" width="15.500" height="15.500" fill="none" stroke="#888" strokeDasharray="2 1.500" /><circle cx="7.500" cy="7.500" r="5" fill="#f6f6f6" stroke="#555" strokeWidth="1.300" /><path d="M11 11l4 4" stroke="#444" strokeWidth="2" /><path d="M5 7.500h5M7.500 5v5" stroke="#111" strokeWidth="1.300" /></svg>,
  fit: <svg width="16" height="14" viewBox="0 0 16 14"><rect x=".5" y=".5" width="15" height="13" fill="#f6f6f6" stroke="#666" /><path d="M3 5.500V3h2.500M10.500 3H13v2.500M13 8.500V11h-2.500M5.500 11H3V8.500M3 3l3 2.500M13 3l-3 2.500M13 11l-3-2.500M3 11l3-2.500" fill="none" stroke="#222" /></svg>,
  arrows: <svg width="15" height="10" viewBox="0 0 15 10"><path d="M0 2.500h13M10 .5l3.500 2L10 4.500" fill="none" stroke="#222" /><path d="M0 7.500h13M10 5.500l3.500 2-3.500 2" fill="none" stroke="#777" /></svg>,
  note: <svg width="14" height="12" viewBox="0 0 14 12"><rect x=".5" y=".5" width="13" height="11" fill="#fff" stroke="#666" /><path d="M2.500 9L5 3l2 6M3.500 7h3" fill="none" stroke="#111" strokeWidth="1.400" /><path d="M8.500 3.500H12M8.500 6H12M8.500 8.500H12" stroke="#333" /></svg>,
  image: <svg width="16" height="14" viewBox="0 0 16 14"><rect x=".5" y=".5" width="15" height="13" fill="#f5f5f5" stroke="#777" /><rect x="2" y="2" width="12" height="10" fill="#b5b5b5" /><path d="M2 9q3-6 6-1t6 0" fill="none" stroke="#666" strokeWidth="1.500" /></svg>,
  area: <svg width="14" height="14" viewBox="0 0 14 14"><rect x=".5" y=".5" width="13" height="13" fill="#e8e6f5" stroke="#888" /></svg>,
  camera: <svg width="16" height="12" viewBox="0 0 16 12"><path d="M.5 1.500h15v10H.5z" fill="#bbb" stroke="#666" /><path d="M2 .5h4" stroke="#444" /><circle cx="7.500" cy="6.500" r="4" fill="#eee" stroke="#444" strokeWidth="1.200" /><circle cx="7.500" cy="6.500" r="1.900" fill="#333" /></svg>,
  book: <svg width="16" height="16" viewBox="0 0 16 16"><rect x=".5" y="2.500" width="15" height="13" fill="#f4f4f4" stroke="#777" /><path d="M9 5h5v3.500H9zM9 10h5v3.500H9zM2 10h5v3.500H2z" fill="#999" /><path d="M2 0h6v10L5 7.500 2 10z" fill="#333" /></svg>,
  chevrons: <svg width="10" height="10" viewBox="0 0 10 10"><path d="M5 .5L.8 5 5 9.500M9.500.5L5.300 5l4.200 4.500" fill="none" stroke="#444" strokeWidth="1.200" /></svg>,
};

const tri = { up: "M0 5h8L4 0z", down: "M0 0h8L4 5z", left: "M5 0v8L0 4z", right: "M0 0v8l5-4z" };
const Tri = ({ dir }) => <svg width="8" height="8" viewBox={dir === "up" || dir === "down" ? "0 -1.500 8 8" : "-1.500 0 8 8"}><path d={tri[dir]} fill="#555" /></svg>;

const dock = [
  { icon: <Firefox />, up: 2 }, { icon: <Files />, pips: [29] }, { icon: <Software />, up: 1 }, { icon: <Help /> },
  { icon: <Terminal />, pips: [28], down: 3 }, { icon: <Chrome /> }, { icon: <Eclipse /> }, { icon: <RIcon /> }, { icon: <VSCode /> },
  { icon: <Gedit />, pips: [29], up: 2 }, { icon: <MatlabLogo w={48} h={45} />, pips: [25, 33], active: true },
];

export default function App() {
  return (
    <Screen>
      <Global />
      <TopBar>
        <TopGroup>
          <TopText $mr={21} $ls={.3}>Activities</TopText><SimulinkMark />
          <TopText $ml={6} $mr={6} $ls={.25}>MATLAB R2020b</TopText><Caret w={9} h={5} c="#d5d3cf" />
        </TopGroup>
        <Clock $gap={4}><TopText>Fri 14:52</TopText><svg width="8" height="8"><circle cx="4" cy="4" r="4" fill="#d5d3cf" /></svg></Clock>
        <TopGroup $end $gap={13}><Network /><Volume /><Battery /><Caret w={9} h={5} c="#d5d3cf" /></TopGroup>
      </TopBar>
      <Body>
        <Dock>
          {dock.map(({ icon, pips = [], active, up, down }, i) => (
            <DockItem key={i} $active={active} $up={up} $down={down}>{pips.map(y => <Pip key={y} $y={y} />)}{icon}</DockItem>
          ))}
          <DockFoot><Apps /></DockFoot>
        </Dock>
        <Window>
          <TitleBar><i /><WinTitle>platoon3 * - Simulink academic use</WinTitle><WinButtons><WinButton kind="-" /><WinButton kind="o" /><WinButton kind="x" /></WinButtons></TitleBar>
          <TabStrip>
            <RibbonTab $active $ls={-.2}>SIMULATION</RibbonTab>
            {["DEBUG", "MODELING", "FORMAT", "APPS"].map(t => <RibbonTab key={t} $ls={-.2}>{t}</RibbonTab>)}
            <Quick>
              <Save /><Gap $w={11} /><Undo /><Gap $w={9} /><Undo redo /><Gap $w={11} /><Shortcut /><Gap $w={5} /><Caret /><Gap $w={11} /><HelpSmall /><Gap $w={8} /><Caret /><Gap $w={16} /><DropRound />
            </Quick>
          </TabStrip>
          <Ribbon>
            <Section $w={58}>
              <SectionBody><BigButton $w={55}><IconBox><Project /></IconBox><Line>Project</Line><Line><Caret /></Line></BigButton></SectionBody>
              <Caption>PROJECT</Caption>
            </Section>
            <Section $w={142}>
              <SectionBody>
                <BigButton $w={42}><IconBox><Plus /></IconBox><Line>New</Line><Line><Caret /></Line></BigButton>
                <FileList>
                  <FileRow><Folder /><RowLabel $w={39}>Open</RowLabel><Caret /></FileRow>
                  <FileRow><Save /><RowLabel $w={34}>Save</RowLabel><Caret /></FileRow>
                  <FileRow><Printer /><RowLabel $w={36}>Print</RowLabel><Caret /></FileRow>
                </FileList>
              </SectionBody>
              <Caption>FILE</Caption>
            </Section>
            <Section $w={63}>
              <SectionBody><BigButton $w={62}><IconBox><Library /></IconBox><Line>Library</Line><Line>Browser</Line></BigButton></SectionBody>
              <Caption>LIBRARY</Caption>
            </Section>
            <Section $w={290}>
              <SectionBody $pl={3}>
                <Gallery $w={283}>
                  <BigButton $w={94} $top={6} $off><IconBox $mb={1}><LogSignals /></IconBox><Line>Log</Line><Line>Signals</Line></BigButton>
                  <BigButton $w={75} $top={6} $off><IconBox $mb={1}><AddViewer /></IconBox><Line>Add</Line><Line>Viewer</Line></BigButton>
                  <BigButton $w={92} $top={6}><IconBox $mb={1}><SignalTable /></IconBox><Line>Signal</Line><Line>Table</Line></BigButton>
                  <GalleryDrop><Caret /></GalleryDrop>
                </Gallery>
              </SectionBody>
              <Caption>PREPARE</Caption>
            </Section>
            <Section $w={369}>
              <SectionBody $pl={3}>
                <SimForm>
                  <SimRow><RaisedLabel>Stop Time</RaisedLabel><Input>10.0</Input></SimRow>
                  <Select>Normal<Caret /></Select>
                  <FastRestart><Fast />Fast Restart</FastRestart>
                </SimForm>
                <BigButton $w={60}><IconBox><StepBack /></IconBox><Line>Step</Line><Line>Back<Caret /></Line></BigButton>
                <BigButton $w={53}><IconBox><Run /></IconBox><Line>Run</Line><Line><Caret /></Line></BigButton>
                <BigButton $w={67}><IconBox><StepFwd /></IconBox><Line>Step</Line><Line>Forward</Line></BigButton>
                <BigButton $w={44} $off><IconBox><Run off /></IconBox><Line>Stop</Line></BigButton>
              </SectionBody>
              <Caption>SIMULATE</Caption>
            </Section>
            <Section $w={678}>
              <SectionBody $pl={3}>
                <Gallery $w={671}>
                  <BigButton $w={90} $top={6}><IconBox $mb={1}><DataInsp /></IconBox><Line>Data</Line><Line>Inspector</Line></BigButton>
                  <GalleryDrop><Caret /></GalleryDrop>
                </Gallery>
              </SectionBody>
              <Caption>REVIEW RESULTS</Caption>
            </Section>
            <RibbonRest><Collapse /></RibbonRest>
          </Ribbon>
          <Workspace>
            <LeftRail><SideTab $h={111} $flip $ls={.25}>Model Browser</SideTab></LeftRail>
            <Center>
              <DocBar>
                <NavIcons><NavArrow on /><NavArrow turn={180} /><NavArrow turn={90} /></NavIcons>
                <DocTab $active $w={99}><TabLabel $active>platoon3</TabLabel><Close on /></DocTab>
                {[["Host", 74], ["Host", 74], ["Host", 74], ["Node3", 85]].map(([t, w], i) => <DocTab key={i} $w={w}><TabLabel>{t}</TabLabel><Close /></DocTab>)}
                <Keyboard><KeyboardIcon /></Keyboard>
              </DocBar>
              <EditorRow>
                <Palette>
                  {paletteIcons.hide}<PaletteRule />
                  {["zoom", "fit", "arrows", "note", "image", "area"].map(k => <PaletteIcon key={k}>{paletteIcons[k]}</PaletteIcon>)}
                  <Spring />
                  {["camera", "book", "chevrons"].map(k => <PaletteIcon key={k}>{paletteIcons[k]}</PaletteIcon>)}
                </Palette>
                <Editor>
                  <PathBar><SimulinkMark boxed />platoon3<Gap $w={1} /><svg width="5" height="9"><path d="M0 0v9l5-4.500z" /></svg><PathDrop><Caret w={9} h={5} /></PathDrop></PathBar>
                  <CanvasRow>
                    <Canvas>
                      <Block $x={88} $y={443} $w={84} $h={268} />
                      <BlockName $cx={158.500} $w={52} $y={716}>Node2)</BlockName>
                      <Sum x={313} y={443} name="Ack(for Node2)" />
                      <Sum x={485} y={473} name="Agree(for Node1)" />
                      <Sum x={658} y={473} name="Alert(for Node1)" />
                      <Sum x={853} y={473} name="Ack(for Node1)" />
                      <Chart $x={868} $y={231} $w={91} $h={108.500} $r={12}>
                        <Ghost $x={8} $y={32} width="76" height="45" fill="none" stroke="#bba" opacity=".25"><rect x=".5" y="2.500" width="72" height="41" rx="2" /><rect x="3.500" y="18.500" width="9" height="6" /><path d="M3 21h9M31 12v26M28 40h40" /></Ghost>
                        <Port $y={46} $side="right">distance</Port>
                      </Chart>
                      <Display x={1108} y={262} w={136} rw={104} value="38" />
                      <Chart $x={1130.500} $y={425.500} $w={218.500} $h={454} $r={22}>
                        <Ghost $x={21} $y={169} width="178" height="120" fill="none" stroke="#a99e86">
                          <g opacity=".35"><rect x=".5" y="8.500" width="62" height="46" rx="2" /><path d="M0 11.500h62M112 7.500h62" /><rect x="112.500" y="5.500" width="62" height="46" rx="2" /><path opacity=".6" d="M63 23.500h50M63 36.500h50M117.500 1v4" /></g>
                          <g opacity=".16"><rect x=".5" y="68.500" width="62" height="46" rx="2" /><path d="M0 71.500h62M112 67.500h62" /><rect x="112.500" y="65.500" width="62" height="46" rx="2" /><path opacity=".6" d="M63 82.500h50M63 96.500h50M117.500 61v4" /></g>
                        </Ghost>
                        {["v1", "hosting", "agree1", "alert1", "ack1"].map((t, i) => <Port key={t} $y={39.500 + i * 90}>{t}</Port>)}
                        {["agree", "alert", "ack", "platoon_failure", "platoon_success"].map((t, i) => <Port key={t} $y={39.500 + i * 90} $side="right">{t}</Port>)}
                      </Chart>
                      <BlockName $cx={1239.500} $y={884}>Node2</BlockName>
                      <Block $x={1107} $y={348} $w={63} $h={84} $bw={2}>
                        <FnLogo><MatlabLogo w={24} h={24} /></FnLogo><FnName>v1</FnName><Port $y={33} $side="right">x</Port>
                      </Block>
                      <Display x={1422.500} y={667} w={137} rw={104} value="1" />
                      <Display x={1422.500} y={742} w={137} rw={104} value="2" />
                      <Delay y={446} /><Delay y={536} /><Delay y={626} />
                      <Grip />
                      <Diagram />
                    </Canvas>
                    <VScroll><ScrollBtn $b="0 0 1px 0"><Tri dir="up" /></ScrollBtn><Trough $s={27} /><VThumb /><Trough /><ScrollBtn $b="1px 0 0 0"><Tri dir="down" /></ScrollBtn></VScroll>
                    <HScroll><ScrollBtn $b="0 1px 0 0"><Tri dir="left" /></ScrollBtn><Trough $s={652} /><HThumb /><Trough /><ScrollBtn $b="0 0 0 1px"><Tri dir="right" /></ScrollBtn></HScroll>
                    <Corner />
                  </CanvasRow>
                </Editor>
              </EditorRow>
            </Center>
            <RightRail><SideTab $h={133} $ls={.2}>Property Inspector</SideTab></RightRail>
          </Workspace>
          <StatusBar><span>Ready</span><Zoom>150%</Zoom><Solver>auto(VariableStepDiscrete)</Solver></StatusBar>
        </Window>
      </Body>
    </Screen>
  );
}
